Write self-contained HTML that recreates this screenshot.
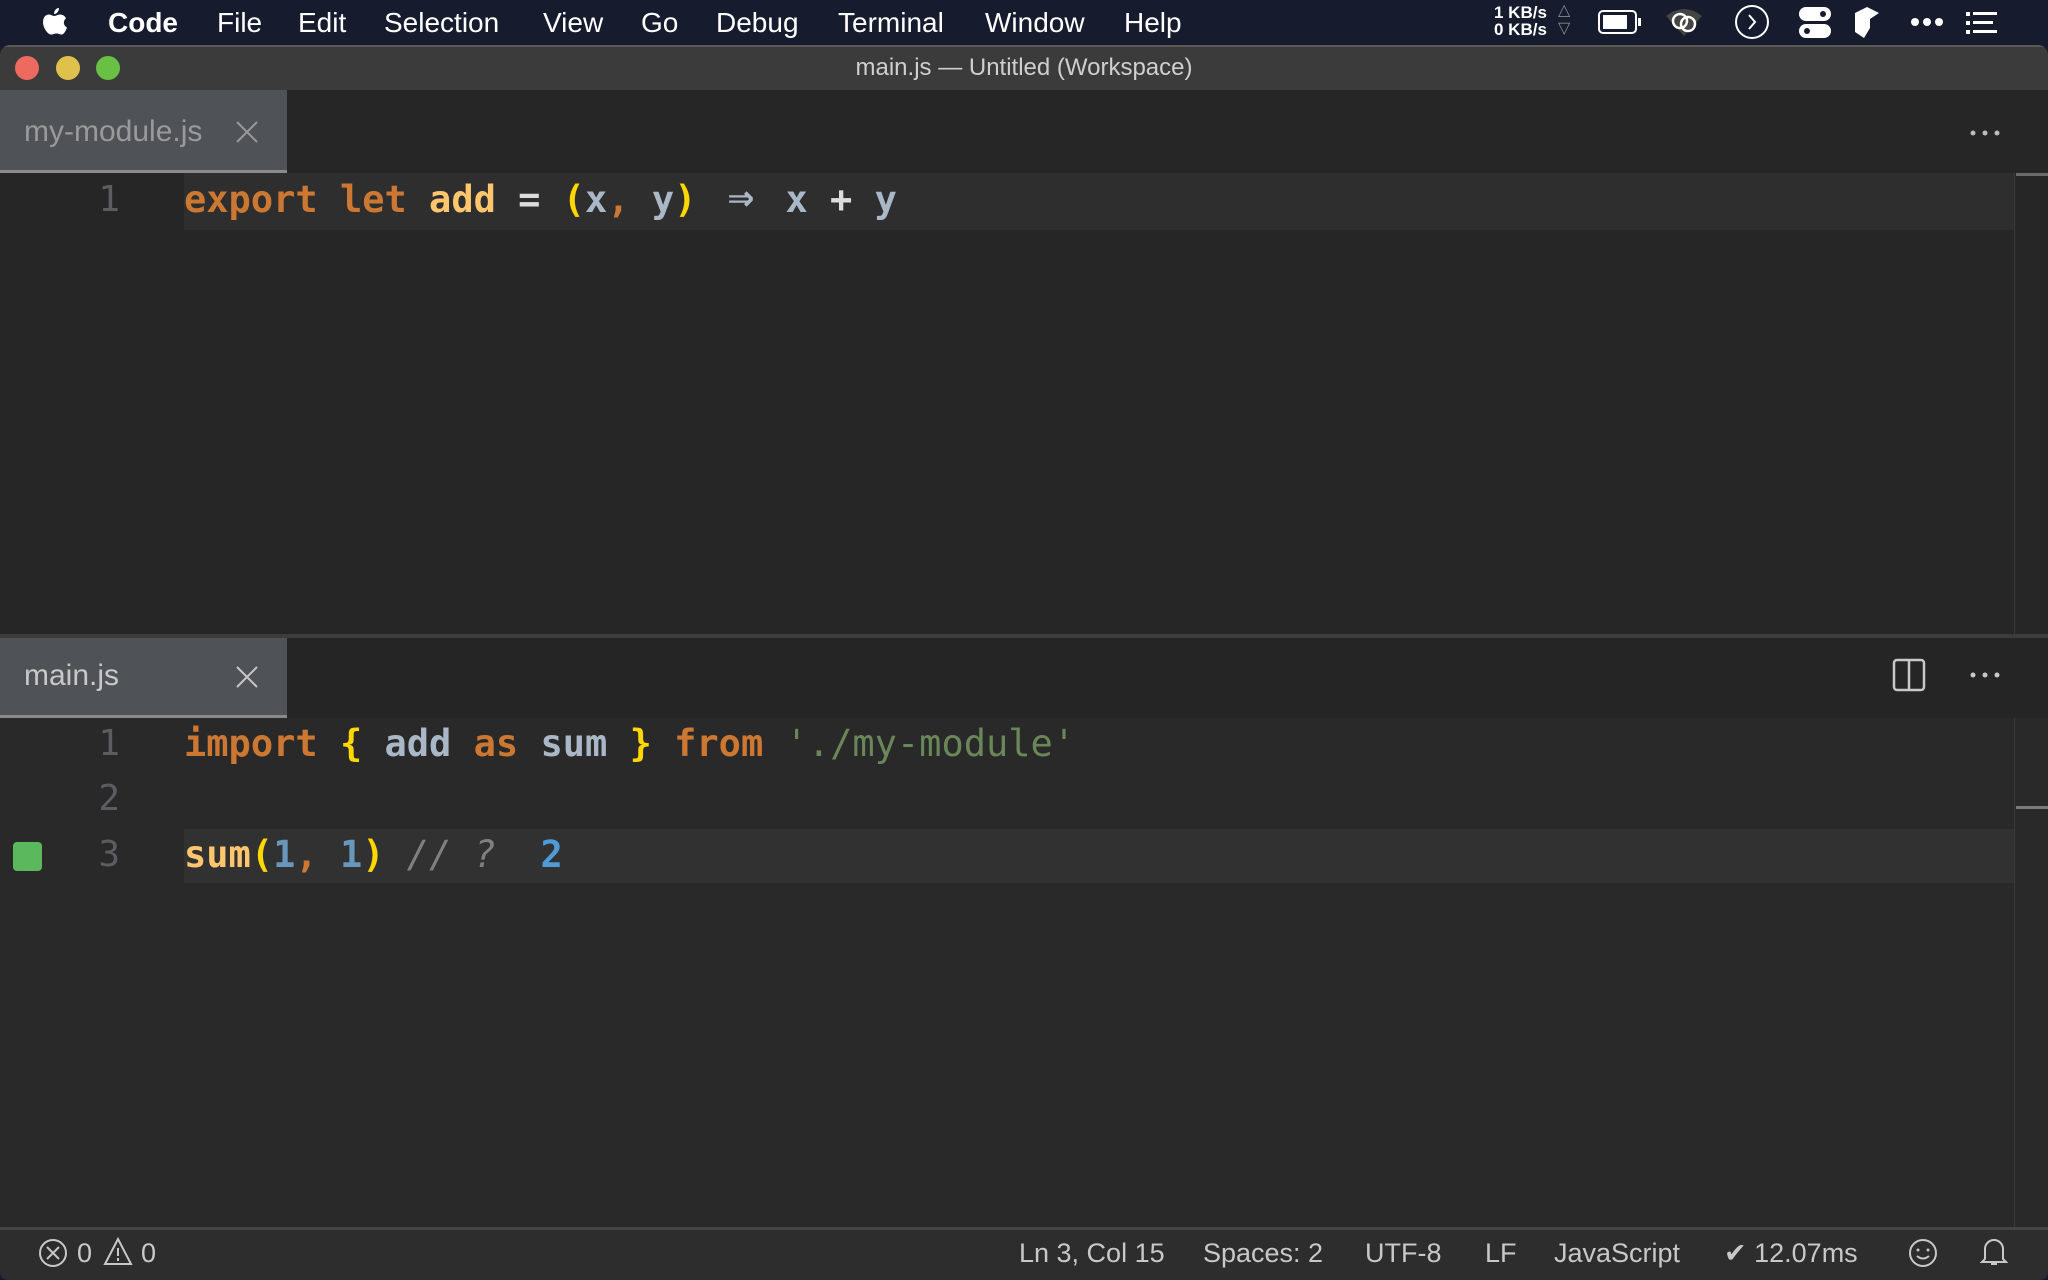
<!DOCTYPE html>
<html><head><meta charset="utf-8"><style>
*{margin:0;padding:0;box-sizing:border-box}
body{width:2048px;height:1280px;background:#161b2e;position:relative;overflow:hidden;font-family:"Liberation Sans",sans-serif}
.a{position:absolute;white-space:pre}
.menu{top:0;height:45px;line-height:45px;font-size:28px;color:#fff}
.win{position:absolute;left:0;top:45px;width:2048px;height:1235px;background:#262626;border-radius:10px 10px 8px 8px;overflow:hidden}
.code{font-family:"DejaVu Sans Mono","Liberation Mono",monospace;font-size:37px;font-weight:bold}
.ln{font-family:"DejaVu Sans Mono",monospace;font-size:36px;color:#5a5e63;width:60px;text-align:right}
.k{color:#cc7832}.f{color:#ffc66d}.p{color:#ffd700}.i{color:#a9b7c6}.s{color:#6a8759;font-weight:normal}.n{color:#6897bb}.c{color:#808080;font-style:italic;font-weight:normal}
.st{top:1237px;font-size:27px;color:#c8c8c8;line-height:30px}
.arr{display:inline-block;width:44.5px;text-align:center;font-size:44px;line-height:37px;color:#a9b7c6;vertical-align:top}
</style></head><body>
<svg class="a" style="left:40px;top:8px" width="28" height="30" viewBox="0 0 28 30"><path fill="#fff" d="M19 0c0 3-2 6-5 6 0-3 2-6 5-6zM14 8c2 0 4-1.5 6-1.5 2 0 5 1 6 4-3 2-3 7 1 9-1 3-3 7-5.5 7-2 0-2.5-1-5-1s-3 1-5 1C8 27 3 20 3 14c0-5 3-7.5 6-7.5 2 0 3.5 1.5 5 1.5z"/></svg>
<div class="a menu" style="left:108px;font-weight:bold">Code</div>
<div class="a menu" style="left:217px">File</div>
<div class="a menu" style="left:298px">Edit</div>
<div class="a menu" style="left:384px">Selection</div>
<div class="a menu" style="left:543px">View</div>
<div class="a menu" style="left:641px">Go</div>
<div class="a menu" style="left:716px">Debug</div>
<div class="a menu" style="left:838px">Terminal</div>
<div class="a menu" style="left:985px">Window</div>
<div class="a menu" style="left:1124px">Help</div>
<div class="a" style="left:1494px;top:4px;font-size:17px;line-height:17px;color:#fff;font-weight:bold;text-align:right">1 KB/s<br>0 KB/s</div>
<div class="a" style="left:1558px;top:2px;font-size:16px;line-height:18px;color:#888">△<br>▽</div>
<svg class="a" style="left:1598px;top:10px" width="48" height="26"><rect x="1" y="1" width="37" height="22" rx="4" fill="none" stroke="#fff" stroke-width="2"/><rect x="5" y="5" width="24" height="14" fill="#fff"/><rect x="40" y="8" width="3" height="8" fill="#fff"/></svg>
<svg class="a" style="left:1664px;top:6px" width="40" height="32"><path d="M2 10 Q20 -4 38 10 L20 30Z" fill="#444"/><circle cx="16" cy="15" r="7" fill="none" stroke="#fff" stroke-width="2.5"/><circle cx="24" cy="18" r="7" fill="none" stroke="#fff" stroke-width="2.5"/></svg>
<svg class="a" style="left:1734px;top:4px" width="36" height="36"><circle cx="18" cy="18" r="16" fill="none" stroke="#fff" stroke-width="2"/><path d="M15 11l6 7-6 7" fill="none" stroke="#fff" stroke-width="2"/></svg>
<svg class="a" style="left:1798px;top:6px" width="34" height="34"><rect x="1" y="1" width="32" height="14" rx="7" fill="#fff"/><rect x="1" y="18" width="32" height="14" rx="7" fill="#fff"/><circle cx="25" cy="8" r="3" fill="#161b2e"/><circle cx="9" cy="25" r="3" fill="#161b2e"/></svg>
<svg class="a" style="left:1854px;top:6px" width="26" height="34"><path d="M1 7 L13 1 L25 7 L16 13 L16 22 L10 32 L1 26Z" fill="#fff"/></svg>
<svg class="a" style="left:1910px;top:15px" width="36" height="14"><circle cx="5" cy="7" r="4" fill="#fff"/><circle cx="17" cy="7" r="4" fill="#fff"/><circle cx="29" cy="7" r="4" fill="#fff"/></svg>
<svg class="a" style="left:1966px;top:11px" width="32" height="24"><rect x="0" y="1" width="4" height="4" fill="#fff"/><rect x="7" y="1" width="24" height="3" fill="#fff"/><rect x="0" y="10" width="4" height="4" fill="#fff"/><rect x="7" y="10" width="20" height="3" fill="#fff"/><rect x="0" y="19" width="4" height="4" fill="#fff"/><rect x="7" y="19" width="24" height="3" fill="#fff"/></svg>

<div class="win">
 <div class="a" style="left:0;top:0;width:2048px;height:45px;background:#3b3b3b;border-top:2px solid #5a5a5a"></div>
 <div class="a" style="left:15px;top:11px;width:24px;height:24px;border-radius:50%;background:#ed6a5e"></div>
 <div class="a" style="left:56px;top:11px;width:24px;height:24px;border-radius:50%;background:#e0c14c"></div>
 <div class="a" style="left:96px;top:11px;width:24px;height:24px;border-radius:50%;background:#6ac045"></div>
 <div class="a" style="left:0;top:0;width:2048px;height:45px;line-height:45px;text-align:center;font-size:24px;color:#cfcfcf">main.js — Untitled (Workspace)</div>

 <div class="a" style="left:0;top:45px;width:287px;height:83px;background:#4f5357;border-bottom:3px solid #8a8a8a"></div>
 <div class="a" style="left:24px;top:70px;font-size:30px;color:#9a9a9a">my-module.js</div>
 <svg class="a" style="left:236px;top:76px" width="22" height="22"><path d="M1 1L21 21M21 1L1 21" stroke="#9a9a9a" stroke-width="2"/></svg>
 <svg class="a" style="left:1970px;top:84px" width="32" height="8"><circle cx="3" cy="4" r="2.5" fill="#bbb"/><circle cx="15" cy="4" r="2.5" fill="#bbb"/><circle cx="27" cy="4" r="2.5" fill="#bbb"/></svg>
 <div class="a" style="left:0;top:128px;width:2048px;height:506px;background:#262626"></div>
 <div class="a" style="left:184px;top:128px;width:1830px;height:57px;background:#2e2e2e"></div>
 <div class="a" style="left:2014px;top:128px;width:1px;height:506px;background:#3a3a3a"></div>
 <div class="a" style="left:2016px;top:128px;width:32px;height:3px;background:#6a6a6a"></div>
 <div class="a ln" style="left:60px;top:134px">1</div>
 <div class="a code" style="left:184px;top:133px"><span class="k">export</span> <span class="k">let</span> <span class="f">add</span> <span style="color:#ddd">=</span> <span class="p">(</span><span class="i">x</span><span class="k">,</span> <span class="i">y</span><span class="p">)</span> <span class="arr">⇒</span> <span class="i">x</span> <span style="color:#ddd">+</span> <span class="i">y</span></div>

 <div class="a" style="left:0;top:589px;width:2048px;height:4px;background:#3c3c3c"></div>

 <div class="a" style="left:0;top:593px;width:2048px;height:80px;background:#252525"></div>
 <div class="a" style="left:0;top:593px;width:287px;height:80px;background:#4f5357;border-bottom:3px solid #8a8a8a"></div>
 <div class="a" style="left:24px;top:614px;font-size:30px;color:#c8c8c8">main.js</div>
 <svg class="a" style="left:236px;top:621px" width="22" height="22"><path d="M1 1L21 21M21 1L1 21" stroke="#c8c8c8" stroke-width="2"/></svg>
 <svg class="a" style="left:1892px;top:613px" width="34" height="34"><rect x="2" y="2" width="30" height="30" rx="3" fill="none" stroke="#c8c8c8" stroke-width="2.5"/><line x1="17" y1="2" x2="17" y2="32" stroke="#c8c8c8" stroke-width="2.5"/></svg>
 <svg class="a" style="left:1970px;top:626px" width="32" height="8"><circle cx="3" cy="4" r="2.5" fill="#c8c8c8"/><circle cx="15" cy="4" r="2.5" fill="#c8c8c8"/><circle cx="27" cy="4" r="2.5" fill="#c8c8c8"/></svg>
 <div class="a" style="left:0;top:673px;width:2048px;height:509px;background:#292929"></div>
 <div class="a" style="left:2014px;top:673px;width:1px;height:509px;background:#3a3a3a"></div>
 <div class="a" style="left:2016px;top:761px;width:32px;height:3px;background:#7a7a7a"></div>
 <div class="a" style="left:184px;top:784px;width:1830px;height:54px;background:#313131"></div>
 <div class="a" style="left:13px;top:797px;width:29px;height:29px;border-radius:4px;background:#5cb85c"></div>
 <div class="a ln" style="left:60px;top:678px">1</div>
 <div class="a ln" style="left:60px;top:733px">2</div>
 <div class="a ln" style="left:60px;top:789px">3</div>
 <div class="a code" style="left:184px;top:677px"><span class="k">import</span> <span class="p">{</span> <span class="i">add</span> <span class="k">as</span> <span class="i">sum</span> <span class="p">}</span> <span class="k">from</span> <span class="s">'./my-module'</span></div>
 <div class="a code" style="left:184px;top:788px"><span class="f">sum</span><span class="p">(</span><span class="n">1</span><span class="k">,</span> <span class="n">1</span><span class="p">)</span> <span class="c">// ?</span>  <span style="color:#4e9bd8">2</span></div>

 <div class="a" style="left:0;top:1182px;width:2048px;height:3px;background:#444"></div>
 <div class="a" style="left:0;top:1185px;width:2048px;height:50px;background:#2d2d2d"></div>
 <svg class="a" style="left:38px;top:1193px" width="30" height="30"><circle cx="15" cy="15" r="13" fill="none" stroke="#c8c8c8" stroke-width="2"/><path d="M9 9l12 12M21 9L9 21" stroke="#c8c8c8" stroke-width="2"/></svg>
 <svg class="a" style="left:103px;top:1192px" width="30" height="30"><path d="M15 2L28 27H2Z" fill="none" stroke="#c8c8c8" stroke-width="2"/><path d="M15 11v8M15 21v3" stroke="#c8c8c8" stroke-width="2"/></svg>
 <div class="a st" style="left:77px;top:1193px">0</div>
 <div class="a st" style="left:141px;top:1193px">0</div>
 <div class="a st" style="left:1019px;top:1193px">Ln 3, Col 15</div>
 <div class="a st" style="left:1203px;top:1193px">Spaces: 2</div>
 <div class="a st" style="left:1365px;top:1193px">UTF-8</div>
 <div class="a st" style="left:1485px;top:1193px">LF</div>
 <div class="a st" style="left:1554px;top:1193px">JavaScript</div>
 <div class="a st" style="left:1724px;top:1193px">✔ 12.07ms</div>
 <svg class="a" style="left:1908px;top:1193px" width="30" height="30"><circle cx="15" cy="15" r="13" fill="none" stroke="#c8c8c8" stroke-width="2"/><circle cx="10" cy="12" r="1.5" fill="#c8c8c8"/><circle cx="20" cy="12" r="1.5" fill="#c8c8c8"/><path d="M9 18q6 5 12 0" fill="none" stroke="#c8c8c8" stroke-width="2"/></svg>
 <svg class="a" style="left:1980px;top:1191px" width="28" height="32"><path d="M5 23V13a9 9 0 0 1 18 0v10l3 3H2z" fill="none" stroke="#c8c8c8" stroke-width="2"/><path d="M11 28h6" stroke="#c8c8c8" stroke-width="2"/></svg>
</div>
</body></html>
